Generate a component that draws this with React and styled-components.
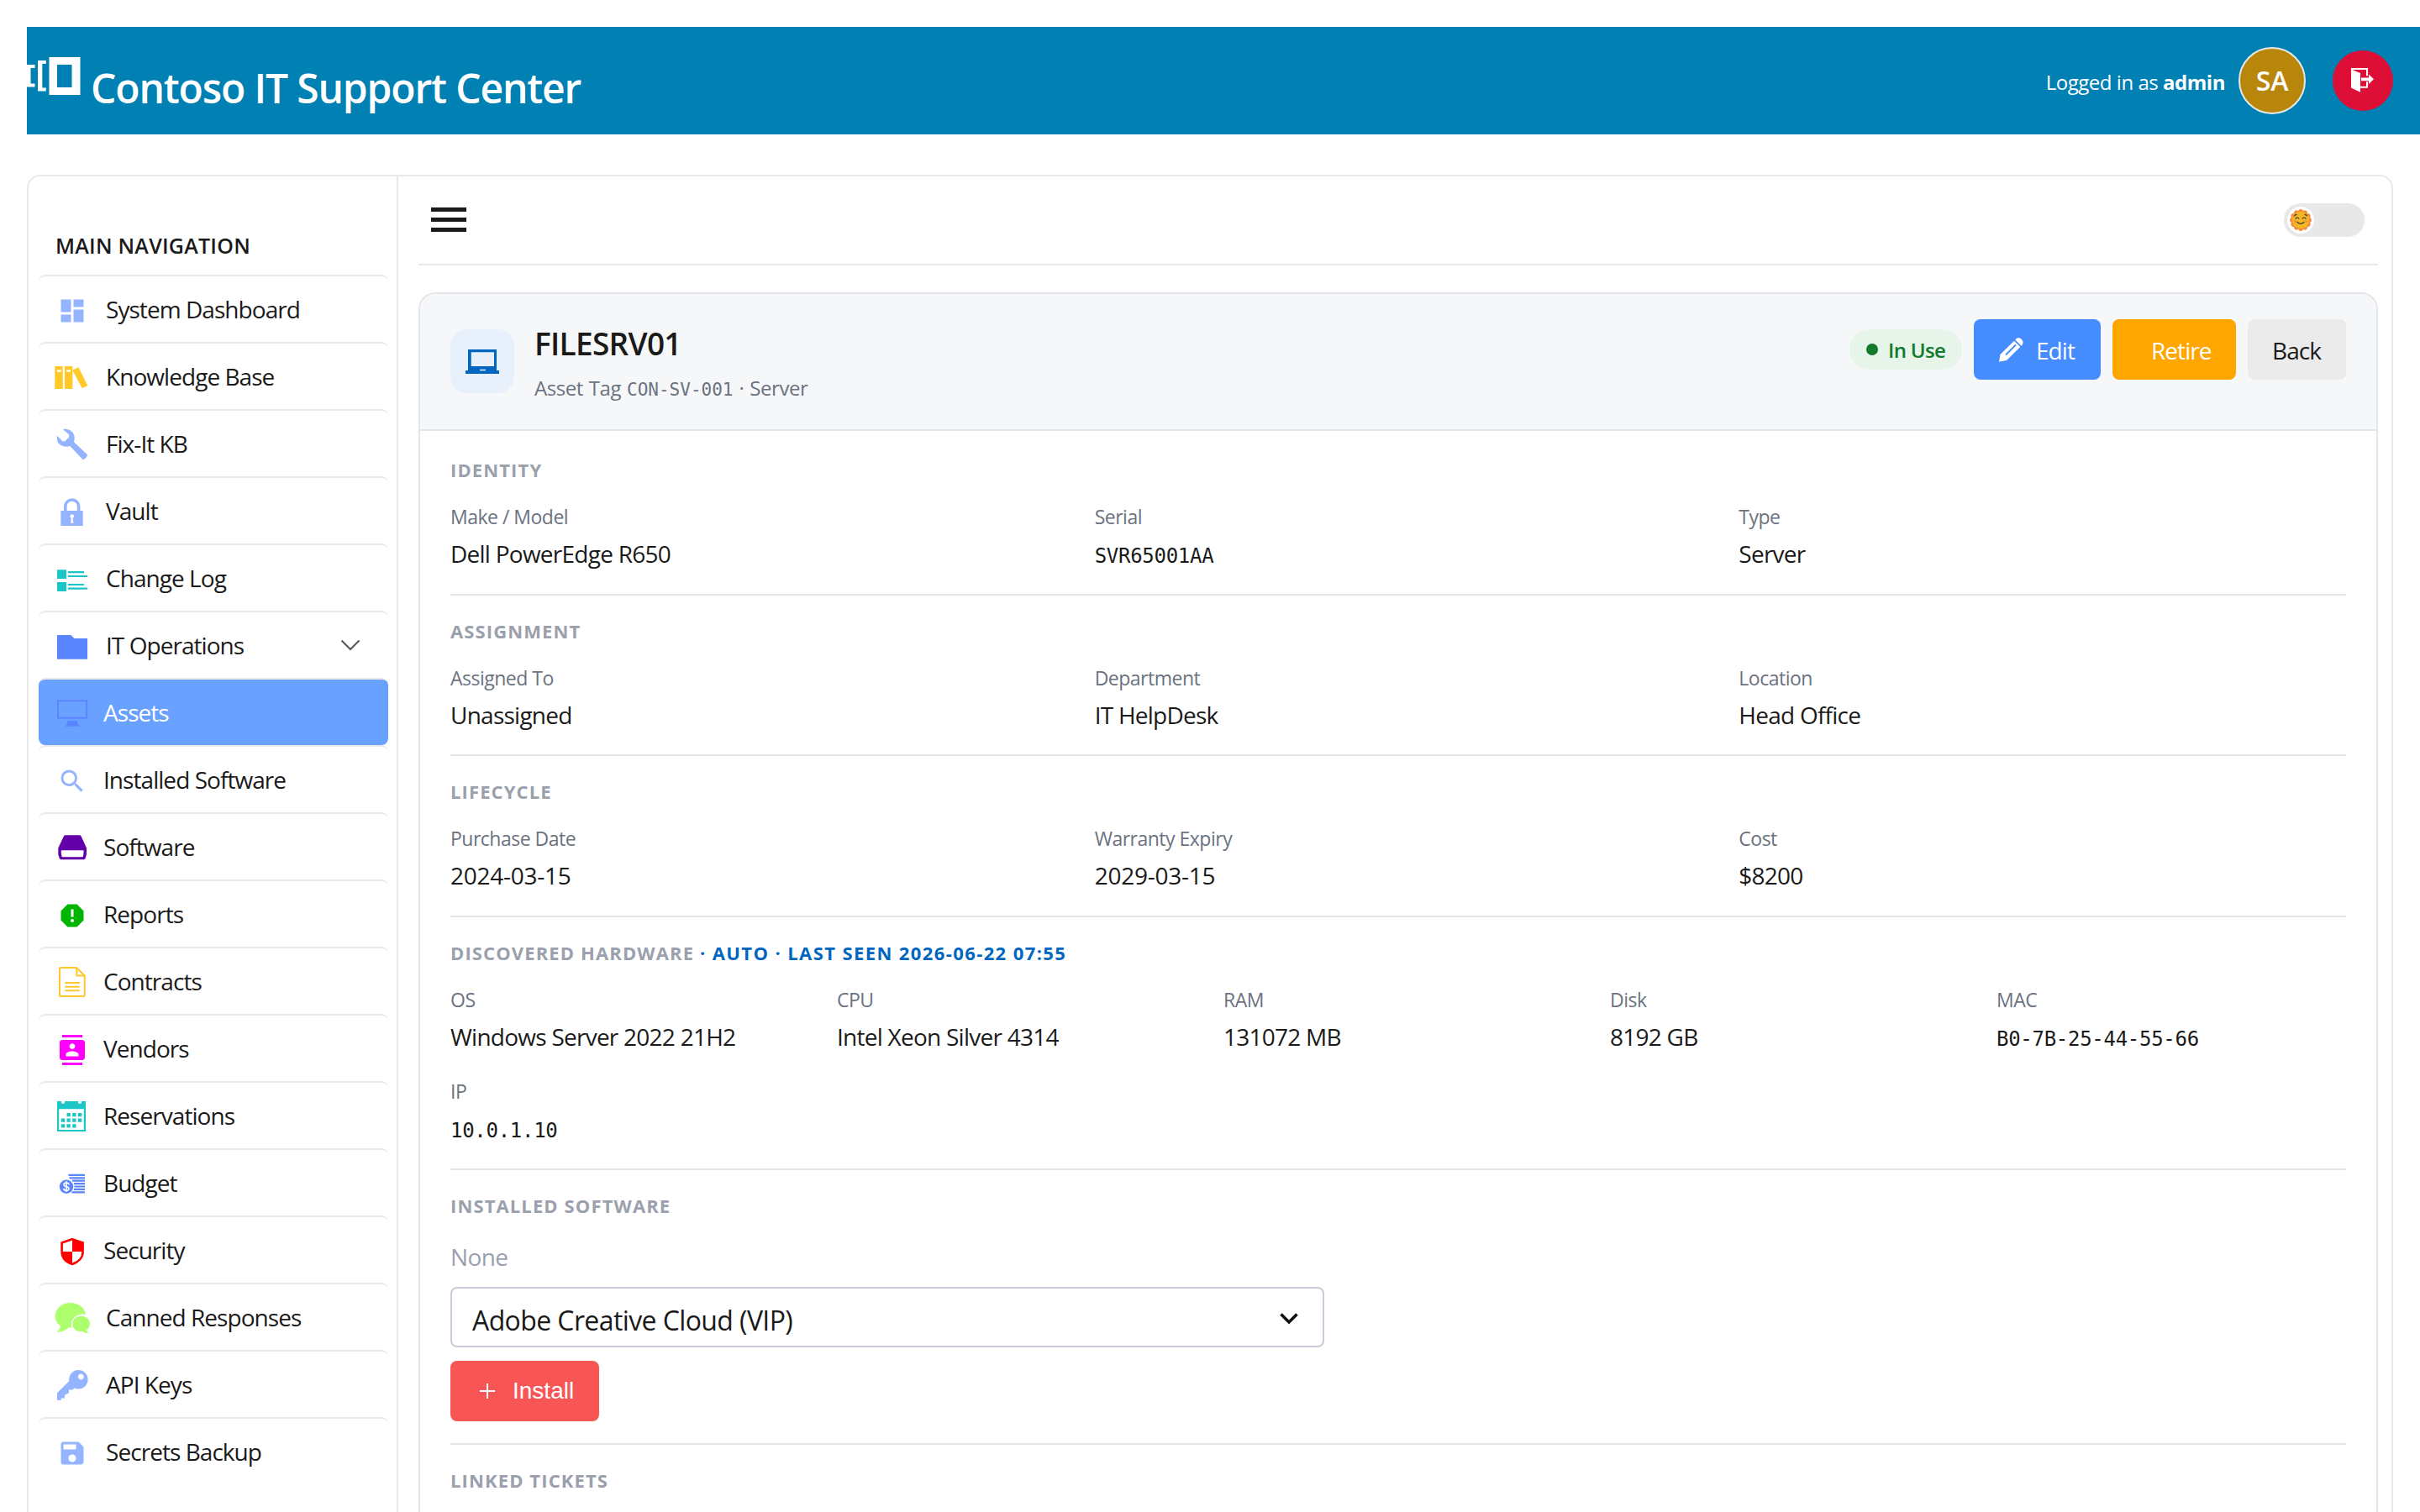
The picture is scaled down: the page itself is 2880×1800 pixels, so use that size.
import React from "react";
import styled, { createGlobalStyle } from "styled-components";
import { MdDashboard, MdSearch, MdReport, MdContacts, MdSave } from "react-icons/md";

const GlobalStyle = createGlobalStyle`
  * {
    box-sizing: border-box;
  }

  body {
    margin: 0;
    background: #ffffff;
    color: #1a1a1a;
    font-family: "Open Sans", "Noto Sans", sans-serif;
    font-size: 28px;
    overflow: hidden;
  }
`;

const Page = styled.div`
  height: 1800px;
  padding: 32px 0 0 32px;
  overflow: hidden;
`;

const Header = styled.header`
  height: 128px;
  padding-right: 32px;
  display: flex;
  align-items: center;
  background: #0080b3;
  color: #ffffff;
`;

const Brand = styled.h1`
  flex: 1;
  margin: 0;
  padding: 17px 0 0 12px;
  font-size: 48px;
  font-weight: 600;
  line-height: 64px;
  letter-spacing: -1.15px;
`;

const LogoSvg = styled.svg`
  width: 64px;
  height: 48px;
  margin-bottom: 8px;
`;

const LoggedIn = styled.span`
  margin-right: 16px;
  padding-top: 2px;
  font-size: 24px;
  letter-spacing: -0.47px;
`;

const Avatar = styled.div`
  width: 80px;
  height: 80px;
  margin-right: 32px;
  display: grid;
  place-content: center;
  border: 2px solid #e8e8e8;
  border-radius: 50%;
  background: #b8860b;
  font-size: 32px;
  font-weight: 600;
  line-height: 40px;
`;

const Logout = styled.button`
  width: 72px;
  height: 72px;
  padding: 0 2px 2px 0;
  display: grid;
  place-content: center;
  border: none;
  border-radius: 50%;
  background: #dd0f37;
`;

const Shell = styled.div`
  width: 2816px;
  height: 1700px;
  margin-top: 48px;
  display: flex;
  border: 2px solid #e8e8e8;
  border-radius: 16px;
`;

const Sidebar = styled.aside`
  width: 440px;
  padding: 56px 10px 0 12px;
  border-right: 2px solid #e8e8e8;
`;

const NavTitle = styled.h2`
  height: 61px;
  margin: 0;
  padding-left: 20px;
  font-size: 25px;
  font-weight: 600;
  line-height: 52px;
  letter-spacing: 0.25px;
`;

const NavItem = styled.a`
  height: 80px;
  padding-left: 22px;
  display: flex;
  align-items: center;
  border-top: 2px solid #e8e8e8;
  border-radius: 8px;
  letter-spacing: -0.95px;
  background: ${({ $active }) => ($active ? "#68a1ff" : "transparent")};
  color: ${({ $active }) => ($active ? "#ffffff" : "#1a1a1a")};
`;

const NavIcon = styled.span`
  width: 36px;
  height: 36px;
  margin: 4px ${({ $wide }) => ($wide ? 22 : 19)}px 0 0;
  font-size: 36px;
  line-height: 0;
  color: ${({ $color }) => $color};

  svg {
    overflow: visible;
  }
`;

const NavLabel = styled.span`
  flex: 1;
`;

const Chevron = styled.svg`
  margin-right: 33px;
`;

const Main = styled.main`
  flex: 1;
  padding: 0 16px 0 24px;
`;

const Toolbar = styled.div`
  height: 106px;
  padding: 0 16px 0 15px;
  display: flex;
  align-items: center;
  justify-content: space-between;
  border-bottom: 2px solid #e8e8e8;
`;

const MenuButton = styled.div`
  width: 42px;
  height: 29px;
  margin-bottom: 1px;
  display: flex;
  flex-direction: column;
  justify-content: space-between;

  span {
    height: 5px;
    background: #1a1a1a;
  }
`;

const Toggle = styled.div`
  width: 96px;
  height: 40px;
  padding: 4px;
  border-radius: 20px;
  background: #e8e8e8;
`;

const Knob = styled.div`
  width: 32px;
  height: 32px;
  display: grid;
  place-content: center;
  border-radius: 50%;
  background: #ffffff;
`;

const Card = styled.section`
  height: 1500px;
  margin-top: 32px;
  border: 2px solid #e2e6eb;
  border-radius: 20px;
  overflow: hidden;
`;

const CardHeader = styled.div`
  height: 163px;
  padding: 0 36px 1px;
  display: flex;
  align-items: center;
  background: #f6f7f9;
  border-bottom: 2px solid #e2e6eb;
`;

const IconTile = styled.div`
  width: 76px;
  height: 76px;
  margin-right: 24px;
  display: grid;
  place-content: center;
  border-radius: 20px;
  background: #e8f0fc;
`;

const Heading = styled.div`
  flex: 1;
  padding-top: 7px;
`;

const AssetName = styled.div`
  margin-bottom: 11px;
  font-size: 37px;
  font-weight: 600;
  line-height: 48px;
  letter-spacing: -0.7px;
`;

const AssetMeta = styled.div`
  font-size: 24px;
  line-height: 36px;
  letter-spacing: -0.45px;
  word-spacing: 1.2px;
  color: #6b7280;
`;

const Mono = styled.span`
  font-family: "DejaVu Sans Mono", monospace;
  font-size: ${({ $size }) => $size || 24}px;
  letter-spacing: ${({ $size }) => ($size ? 0 : -0.28)}px;
`;

const Actions = styled.div`
  margin-bottom: 28px;
  display: flex;
  align-items: center;
  gap: 14px;
`;

const Status = styled.span`
  width: 134px;
  height: 48px;
  padding-left: 20px;
  display: flex;
  align-items: center;
  gap: 12px;
  border-radius: 24px;
  background: #e6f4ea;
  color: #117a2d;
  font-size: 24px;
  font-weight: 600;
  letter-spacing: -0.66px;

  &::before {
    content: "";
    width: 14px;
    height: 14px;
    border-radius: 50%;
    background: #117a2d;
  }
`;

const Button = styled.button`
  width: ${({ $width }) => $width}px;
  height: 72px;
  padding: 1px 0 0 ${({ $left }) => $left}px;
  display: flex;
  align-items: center;
  gap: ${({ $gap }) => $gap || 0}px;
  border: none;
  border-radius: 8px;
  background: ${({ $bg }) => $bg};
  color: ${({ $color }) => $color || "#ffffff"};
  font-family: inherit;
  font-size: 28px;
  letter-spacing: -0.95px;
`;

const InstallButton = styled(Button)`
  font-family: "Liberation Sans", Arial, sans-serif;
  letter-spacing: 0;
`;

const Details = styled.div`
  padding: 4px 36px 0;
`;

const Section = styled.div`
  padding: 27px 0 ${({ $bottom }) => $bottom || 28.67}px;
  border-bottom: 2px solid #e2e6eb;
`;

const SectionTitle = styled.h3`
  margin: 0 0 25px;
  font-size: 22px;
  font-weight: 700;
  line-height: 30px;
  letter-spacing: 1.12px;
  text-transform: uppercase;
  color: #9aa0ac;

  span {
    letter-spacing: 1.4px;
    color: #0066c0;
  }
`;

const Fields = styled.div`
  display: grid;
  grid-template-columns: repeat(${({ $cols }) => $cols}, 1fr);
  gap: 30px 44px;
`;

const FieldLabel = styled.div`
  margin-bottom: 9px;
  font-size: 23px;
  line-height: 32px;
  letter-spacing: -0.5px;
  color: #6b7280;
`;

const FieldValue = styled.div`
  height: 38px;
  line-height: 38px;
  letter-spacing: ${({ $date }) => ($date ? -0.25 : -0.75)}px;
  white-space: nowrap;
`;

const Empty = styled.div`
  margin-bottom: 17px;
  padding-top: 2px;
  line-height: 38px;
  letter-spacing: -0.6px;
  color: #9aa0ac;
`;

const Select = styled.div`
  width: 1040px;
  height: 72px;
  margin-bottom: 16px;
  padding: 8px 29px 0 24px;
  display: flex;
  align-items: center;
  justify-content: space-between;
  border: 2px solid #c8cbd9;
  border-radius: 8px;
  font-size: 32px;
  letter-spacing: -0.6px;

  svg {
    margin-bottom: 4px;
  }
`;

const BooksIcon = () => (
  <svg width="36" height="36" viewBox="0 0 36 36" fill="currentColor">
    <path fillRule="evenodd" d="M-2.7 4h9.4v27h-9.4z M0 8.3v2.4h4.7V8.3z M9 4h9.3v27H9z M11.3 8.3v2.4H16V8.3z" />
    <path d="M18.3 8.7 25.3 5 36.3 27 29.7 30.3z" />
  </svg>
);

const WrenchIcon = () => (
  <svg width="36" height="36" viewBox="0 0 36 36" fill="currentColor">
    <path d="M7 -.8C14-2.500 20.500 2.500 20.700 9c0 2.500-.5 3.500-.7 5.200L36 29.300c.4 2-3.300 6-5.300 6L15.300 18.900C8 21.500 .5 17.500 0 11.300V6.800l6.500 6.400h2.800l4.800-4.800V5.300z" />
  </svg>
);

const LockIcon = () => (
  <svg width="36" height="36" viewBox="0 0 36 36">
    <path d="M4.300 16h26.400v18H4.300z" fill="currentColor" />
    <path d="M9.800 16V10.500a7.900 7.500 0 0 1 15.800 0V16" fill="none" stroke="currentColor" strokeWidth="3.600" />
    <path d="M17.700 20.300a2.300 2.300 0 0 1 1 4.400l.6 6h-3.200l.6-6a2.300 2.300 0 0 1 1-4.400z" fill="#fff" />
  </svg>
);

const ChangeIcon = () => (
  <svg width="36" height="36" viewBox="0 0 36 36" fill="currentColor">
    <path d="M0 6.300h11v10.700H0z M0 21h11v11H0z M13 8h19v2.300H13z M13 13h23v2H13z M13 23h19v2H13z M13 27.500h23v2.200H13z" />
  </svg>
);

const FolderIcon = () => (
  <svg width="36" height="36" viewBox="0 0 36 36" fill="currentColor">
    <path d="M0 4h16.300l4 4H36v24.700H0z" />
  </svg>
);

const MonitorIcon = () => (
  <svg width="36" height="36" viewBox="0 0 36 36">
    <path d="M1 2.300h34v20.400H1z" fill="none" stroke="currentColor" strokeWidth="2" />
    <path d="M12.300 26h11.400c.3 3 1.300 5 3.300 6.700H9.300c2-1.700 3-3.700 3-6.700z" fill="currentColor" />
  </svg>
);

const DriveIcon = () => (
  <svg width="36" height="36" viewBox="0 0 36 36" fill="currentColor">
    <path fillRule="evenodd" d="M10 2.300h16.500q1.500 0 2.200 1.400L35 17.500V25l-1.300 4.800q-.3 1.400-1.700 1.400H4.500q-1.400 0-1.800-1.400L1.300 25v-7.500L7.800 3.700q.7-1.400 2.200-1.400z M6 20.300q-1.300 0-1.300 1.300L5.300 27q.2 1.200 1.500 1.200h22.700q1.300 0 1.500-1.200l.7-5.400q0-1.300-1.400-1.300z" />
  </svg>
);

const ContractIcon = () => (
  <svg width="36" height="36" viewBox="0 0 36 36" fill="none" stroke="currentColor" strokeWidth="2" strokeLinecap="round" strokeLinejoin="round">
    <path d="M3 1q0-1 1-1h19l9.700 9.500V33q0 1-1 1H4q-1 0-1-1z M23.300 .5V9.500h9" />
    <path d="M10 18h16 M10 22.700h16 M10 27.300h16" />
  </svg>
);

const CalendarIcon = () => (
  <svg width="36" height="36" viewBox="0 0 36 36" fill="currentColor">
    <path fillRule="evenodd" d="M0-1h5v1.500q0 1.200 1.200 1.200h1.600Q9 1.700 9 .5V-1h16V.5q0 1.200 1.200 1.200h1.600Q29 1.700 29 .5V-1h5v36H0z M2.200 8.300V33h29.600V8.300z" />
    <path d="M11.500 13h4.300v4.300h-4.300z M18.200 13h4.300v4.300h-4.300z M25 13h4.300v4.300H25z M4.800 19.500h4.300v4.300H4.800z M11.500 19.500h4.300v4.300h-4.300z M18.200 19.500h4.300v4.300h-4.300z M25 19.500h4.300v4.300H25z M4.800 26.200h4.300v4.300H4.800z M11.500 26.200h4.300v4.300h-4.300z M18.200 26.200h4.300v4.300h-4.300z" />
  </svg>
);

const BudgetIcon = () => (
  <svg width="36" height="36" viewBox="0 0 36 36">
    <path d="M13.500 6.900h19.500 M14.500 10.300h18.500 M18 13.700h15 M20 17.100h13 M20.500 20.500h12.500 M20 23.900h13 M17.500 27.300h15.500" stroke="currentColor" strokeWidth="2.200" />
    <circle cx="11" cy="20.700" r="8.200" fill="currentColor" />
    <path d="M14 18.300c-.3-3.200-6-2.900-6 0 0 3.200 6 1.800 6 4.900 0 3-6 3.100-6.200-.3M11 14.300v12.800" fill="none" stroke="#fff" strokeWidth="1.600" />
  </svg>
);

const ShieldIcon = () => (
  <svg width="36" height="36" viewBox="0 0 36 36">
    <path d="M18 3.200 30.600 7.500V18c0 7-5 12.500-12.600 15C10.400 30.500 5.600 25 5.600 18V7.500z" fill="none" stroke="currentColor" strokeWidth="2.600" />
    <path d="M18 3 31 7.500V18H18z M18 18v15C10 30.500 5.500 25 5.500 18z" fill="currentColor" />
  </svg>
);

const ChatIcon = () => (
  <svg width="36" height="36" viewBox="0 0 36 36" fill="currentColor">
    <path d="M15.700-1C26-1 33.500 5.500 34 13c-8-2-17 3-17.200 11.500l.4 4-3.200-.3C9.500 32.500 3.500 34.500-.3 33.300 2.500 31 4 29 4 26.500-8.500 18-1.500-1 15.700-1z" />
    <path d="M28.300 14.700c12 0 13.500 12.500 6.500 16.800 0 1.200 1 2.500 3 3.300-2.200.8-5 .2-7.500-1.800-16 1.500-15-18.300-2-18.300z" />
  </svg>
);

const KeyIcon = () => (
  <svg width="36" height="36" viewBox="0 0 36 36" fill="currentColor">
    <path fillRule="evenodd" d="M25-1A11.300 11.300 0 1 1 20.500 20.500L18.500 22.500H14V26.500H13.500L9 28.700V32.500H4.700V35H0V26.300L14.300 12.300A11.300 11.300 0 0 1 25-1z M28.300 3.600a3.400 3.400 0 1 0 .01 0z" />
  </svg>
);

const LogoMark = () => (
  <LogoSvg viewBox="0 0 64 48" fill="#fff">
    <path d="M0 9h9.500v4H4.500v18.500h5v4H0z M13 4h9.800v4h-4.500v28.500h4.500v4H13z" />
    <path fillRule="evenodd" d="M26.500 0h37v45h-37z M36 9v27h17.500V9z" />
  </LogoSvg>
);

const LogoutIcon = () => (
  <svg width="27" height="29" viewBox="0 0 27 29" fill="#fff">
    <path d="M0 1.500 11 6v22.700L0 23.500z" />
    <path d="M0 0h20v9.300h-2V2H0z M11 21.700h7v-5.400h2v7.500h-9z M12 11.500h9V7.500l6 5.800-6 5.700v-3.800h-9z" />
  </svg>
);

const SunIcon = () => (
  <svg width="26" height="26" viewBox="0 0 26 26">
    <g fill="#f58a3c">
      {[0, 30, 60, 90, 120, 150, 180, 210, 240, 270, 300, 330].map(angle => (
        <circle key={angle} cx="13" cy="3" r="2.900" transform={`rotate(${angle} 13 13)`} />
      ))}
    </g>
    <circle cx="13" cy="13" r="10.200" fill="#f3b724" />
    <path d="M7 11.200q1.800-2.400 3.800 0 M15.200 11.200q1.800-2.400 3.800 0 M9 15.500q4 3.600 8 0 M5.500 8q.8-1.600 2.600-1.700 M20.500 8q-.8-1.600-2.600-1.700" fill="none" stroke="#3f3a3a" strokeWidth="1.200" strokeLinecap="round" />
    <circle cx="6.500" cy="14.500" r="1.400" fill="#f58a3c" />
    <circle cx="19.500" cy="14.500" r="1.400" fill="#f58a3c" />
  </svg>
);

const LaptopIcon = () => (
  <svg width="40" height="29" viewBox="0 0 40 29" fill="#0066c0">
    <path fillRule="evenodd" d="M3 0h34v25h3v4H0v-4h3z M6.700 3.300V20H34V3.300z M17 23.800v1.500h7v-1.500z" />
  </svg>
);

const PencilIcon = () => (
  <svg width="29" height="29" viewBox="0 0 29 29">
    <path d="M0 28.700 1.500 20 18 3.700 25.300 11 9 27z" fill="#fff" />
    <path d="M19.300 2.400 20.500 1.300C24.500-2 31 4 27.500 8.500L26.500 9.700z" fill="#fff" />
    <path d="M8 20.500 20 8.500" stroke="#458cff" strokeWidth="1.800" />
  </svg>
);

const PlusIcon = () => (
  <svg width="22" height="22" viewBox="0 0 22 22" stroke="#fff" strokeWidth="2">
    <path d="M2 11h18 M11 2v18" />
  </svg>
);

const navItems = [
  { label: "System Dashboard", icon: MdDashboard, color: "#94b4ff", wide: true },
  { label: "Knowledge Base", icon: BooksIcon, color: "#ffca28", wide: true },
  { label: "Fix-It KB", icon: WrenchIcon, color: "#94b4ff", wide: true },
  { label: "Vault", icon: LockIcon, color: "#94b4ff", wide: true },
  { label: "Change Log", icon: ChangeIcon, color: "#1bc6c6", wide: true },
  { label: "IT Operations", icon: FolderIcon, color: "#5b84ff", wide: true, open: true },
  { label: "Assets", icon: MonitorIcon, color: "#5b84ff", active: true },
  { label: "Installed Software", icon: MdSearch, color: "#94b4ff" },
  { label: "Software", icon: DriveIcon, color: "#6400aa" },
  { label: "Reports", icon: MdReport, color: "#00b400" },
  { label: "Contracts", icon: ContractIcon, color: "#ffc82d" },
  { label: "Vendors", icon: MdContacts, color: "#ff00ff" },
  { label: "Reservations", icon: CalendarIcon, color: "#1bc6c6" },
  { label: "Budget", icon: BudgetIcon, color: "#5b84ff" },
  { label: "Security", icon: ShieldIcon, color: "#ff0000" },
  { label: "Canned Responses", icon: ChatIcon, color: "#adff6e", wide: true },
  { label: "API Keys", icon: KeyIcon, color: "#94b4ff", wide: true },
  { label: "Secrets Backup", icon: MdSave, color: "#94b4ff", wide: true },
];

const identity = [
  { label: "Make / Model", value: "Dell PowerEdge R650" },
  { label: "Serial", value: "SVR65001AA", mono: true },
  { label: "Type", value: "Server" },
];

const assignment = [
  { label: "Assigned To", value: "Unassigned" },
  { label: "Department", value: "IT HelpDesk" },
  { label: "Location", value: "Head Office" },
];

const lifecycle = [
  { label: "Purchase Date", value: "2024-03-15", date: true },
  { label: "Warranty Expiry", value: "2029-03-15", date: true },
  { label: "Cost", value: "$8200" },
];

const hardware = [
  { label: "OS", value: "Windows Server 2022 21H2" },
  { label: "CPU", value: "Intel Xeon Silver 4314" },
  { label: "RAM", value: "131072 MB" },
  { label: "Disk", value: "8192 GB" },
  { label: "MAC", value: "B0-7B-25-44-55-66", mono: true },
  { label: "IP", value: "10.0.1.10", mono: true },
];

const FieldGrid = ({ fields, cols = 3 }) => (
  <Fields $cols={cols}>
    {fields.map(field => (
      <div key={field.label}>
        <FieldLabel>{field.label}</FieldLabel>
        <FieldValue $date={field.date}>
          {field.mono ? <Mono>{field.value}</Mono> : field.value}
        </FieldValue>
      </div>
    ))}
  </Fields>
);

function App() {
  return (
    <>
      <GlobalStyle />
      <Page>
        <Header>
          <LogoMark />
          <Brand>Contoso IT Support Center</Brand>
          <LoggedIn>Logged in as <b>admin</b></LoggedIn>
          <Avatar>SA</Avatar>
          <Logout><LogoutIcon /></Logout>
        </Header>

        <Shell>
          <Sidebar>
            <NavTitle>MAIN NAVIGATION</NavTitle>
            {navItems.map(item => (
              <NavItem key={item.label} $active={item.active}>
                <NavIcon $color={item.color} $wide={item.wide}><item.icon /></NavIcon>
                <NavLabel>{item.label}</NavLabel>
                {item.open && (
                  <Chevron width="24" height="14" viewBox="0 0 24 14" fill="none" stroke="#555" strokeWidth="2">
                    <path d="M1.500 1.500 12 12 22.500 1.500" />
                  </Chevron>
                )}
              </NavItem>
            ))}
          </Sidebar>

          <Main>
            <Toolbar>
              <MenuButton><span /><span /><span /></MenuButton>
              <Toggle><Knob><SunIcon /></Knob></Toggle>
            </Toolbar>

            <Card>
              <CardHeader>
                <IconTile><LaptopIcon /></IconTile>
                <Heading>
                  <AssetName>FILESRV01</AssetName>
                  <AssetMeta>Asset Tag <Mono $size={21}>CON-SV-001</Mono> · Server</AssetMeta>
                </Heading>
                <Actions>
                  <Status>In Use</Status>
                  <Button $bg="#458cff" $width={151} $left={30} $gap={15}>
                    <PencilIcon />
                    Edit
                  </Button>
                  <Button $bg="#ffa600" $width={147} $left={46}>Retire</Button>
                  <Button $bg="#ebebeb" $color="#1a1a1a" $width={117} $left={29}>Back</Button>
                </Actions>
              </CardHeader>

              <Details>
                <Section>
                  <SectionTitle>Identity</SectionTitle>
                  <FieldGrid fields={identity} />
                </Section>
                <Section>
                  <SectionTitle>Assignment</SectionTitle>
                  <FieldGrid fields={assignment} />
                </Section>
                <Section>
                  <SectionTitle>Lifecycle</SectionTitle>
                  <FieldGrid fields={lifecycle} />
                </Section>
                <Section>
                  <SectionTitle>Discovered Hardware <span>· auto · last seen 2026-06-22 07:55</span></SectionTitle>
                  <FieldGrid fields={hardware} cols={5} />
                </Section>
                <Section $bottom={26}>
                  <SectionTitle>Installed Software</SectionTitle>
                  <Empty>None</Empty>
                  <Select>
                    Adobe Creative Cloud (VIP)
                    <svg width="22" height="14" viewBox="0 0 22 14" fill="none" stroke="#111" strokeWidth="3.600">
                      <path d="M1.500 1.500 11 11 20.500 1.500" />
                    </svg>
                  </Select>
                  <InstallButton $bg="#f85555" $width={177} $left={33} $gap={19}>
                    <PlusIcon />
                    Install
                  </InstallButton>
                </Section>
                <Section>
                  <SectionTitle>Linked Tickets</SectionTitle>
                </Section>
              </Details>
            </Card>
          </Main>
        </Shell>
      </Page>
    </>
  );
}

export default App;
